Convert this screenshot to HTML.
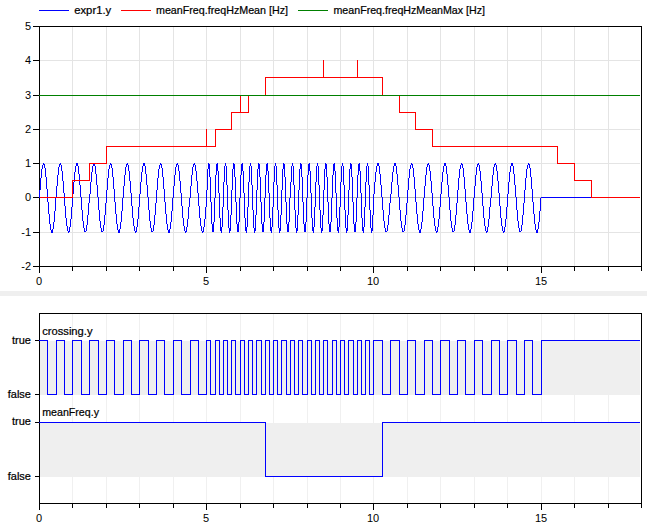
<!DOCTYPE html>
<html><head><meta charset="utf-8"><style>
html,body{margin:0;padding:0;background:#fff;width:647px;height:527px;overflow:hidden;font-family:"Liberation Sans",sans-serif}
svg{display:block}
</style></head><body><svg width="647" height="527" viewBox="0 0 647 527"><g shape-rendering="crispEdges">
<line x1="39" y1="10.5" x2="69" y2="10.5" stroke="#0000ff"/>
<line x1="121" y1="10.5" x2="151" y2="10.5" stroke="#ff0000"/>
<line x1="298" y1="10.5" x2="328" y2="10.5" stroke="#008000"/>
</g>
<text font-family="Liberation Sans, sans-serif" font-size="11" stroke="#000" stroke-width="0.22" fill="#000" y="14.4"><tspan x="74.2" textLength="37" lengthAdjust="spacingAndGlyphs">expr1.y</tspan><tspan x="156" textLength="132" lengthAdjust="spacingAndGlyphs">meanFreq.freqHzMean [Hz]</tspan><tspan x="333.5" textLength="151.5" lengthAdjust="spacingAndGlyphs">meanFreq.freqHzMeanMax [Hz]</tspan></text>
<rect x="0" y="291" width="647" height="5" fill="#efefef"/>
<defs><clipPath id="c1"><rect x="39" y="26" width="601" height="240"/></clipPath><clipPath id="c2"><rect x="39" y="313" width="601" height="190"/></clipPath></defs>
<rect shape-rendering="crispEdges" x="39.5" y="26.5" width="602" height="240" fill="none" stroke="#000"/>
<g shape-rendering="crispEdges">
<line x1="72.5" y1="27" x2="72.5" y2="266" stroke="#e4e4e4"/>
<line x1="106.5" y1="27" x2="106.5" y2="266" stroke="#e4e4e4"/>
<line x1="139.5" y1="27" x2="139.5" y2="266" stroke="#e4e4e4"/>
<line x1="173.5" y1="27" x2="173.5" y2="266" stroke="#e4e4e4"/>
<line x1="206.5" y1="27" x2="206.5" y2="266" stroke="#e4e4e4"/>
<line x1="240.5" y1="27" x2="240.5" y2="266" stroke="#e4e4e4"/>
<line x1="273.5" y1="27" x2="273.5" y2="266" stroke="#e4e4e4"/>
<line x1="307.5" y1="27" x2="307.5" y2="266" stroke="#e4e4e4"/>
<line x1="340.5" y1="27" x2="340.5" y2="266" stroke="#e4e4e4"/>
<line x1="373.5" y1="27" x2="373.5" y2="266" stroke="#e4e4e4"/>
<line x1="407.5" y1="27" x2="407.5" y2="266" stroke="#e4e4e4"/>
<line x1="440.5" y1="27" x2="440.5" y2="266" stroke="#e4e4e4"/>
<line x1="474.5" y1="27" x2="474.5" y2="266" stroke="#e4e4e4"/>
<line x1="507.5" y1="27" x2="507.5" y2="266" stroke="#e4e4e4"/>
<line x1="541.5" y1="27" x2="541.5" y2="266" stroke="#e4e4e4"/>
<line x1="574.5" y1="27" x2="574.5" y2="266" stroke="#e4e4e4"/>
<line x1="608.5" y1="27" x2="608.5" y2="266" stroke="#e4e4e4"/>
<line x1="40" y1="232.5" x2="640" y2="232.5" stroke="#e4e4e4"/>
<line x1="40" y1="197.5" x2="640" y2="197.5" stroke="#b8b8b8"/>
<line x1="40" y1="163.5" x2="640" y2="163.5" stroke="#e4e4e4"/>
<line x1="40" y1="129.5" x2="640" y2="129.5" stroke="#e4e4e4"/>
<line x1="40" y1="95.5" x2="640" y2="95.5" stroke="#e4e4e4"/>
<line x1="40" y1="60.5" x2="640" y2="60.5" stroke="#e4e4e4"/>
</g>
<path clip-path="url(#c1)" shape-rendering="crispEdges" fill="#0000ff" d="M39 190h1v8h-1zM40 178h1v12h-1zM41 169h1v9h-1zM42 165h1v4h-1zM43 163h1v2h-1zM44 164h1v4h-1zM45 168h1v9h-1zM46 177h1v12h-1zM47 189h1v13h-1zM48 202h1v12h-1zM49 214h1v10h-1zM50 224h1v6h-1zM51 230h1v3h-1zM52 229h1v4h-1zM53 222h1v7h-1zM54 211h1v11h-1zM55 198h1v13h-1zM56 186h1v12h-1zM57 175h1v11h-1zM58 167h1v8h-1zM59 164h1v3h-1zM60 163h1v2h-1zM61 165h1v6h-1zM62 171h1v10h-1zM63 181h1v12h-1zM64 193h1v13h-1zM65 206h1v12h-1zM66 218h1v8h-1zM67 226h1v5h-1zM68 231h1v2h-1zM69 227h1v5h-1zM70 219h1v8h-1zM71 207h1v12h-1zM72 194h1v13h-1zM73 182h1v12h-1zM74 172h1v10h-1zM75 166h1v6h-1zM76 163h1v3h-1zM77 163h1v3h-1zM78 166h1v8h-1zM79 174h1v11h-1zM80 185h1v12h-1zM81 197h1v13h-1zM82 210h1v11h-1zM83 221h1v7h-1zM84 228h1v4h-1zM85 231h1v1h-1zM86 225h1v6h-1zM87 215h1v10h-1zM88 203h1v12h-1zM89 194h1v9h-1zM90 182h1v12h-1zM91 172h1v10h-1zM92 166h1v6h-1zM93 163h1v3h-1zM94 163h1v3h-1zM95 166h1v8h-1zM96 174h1v11h-1zM97 185h1v12h-1zM98 197h1v13h-1zM99 210h1v11h-1zM100 221h1v7h-1zM101 228h1v4h-1zM102 231h1v1h-1zM103 225h1v6h-1zM104 215h1v10h-1zM105 203h1v12h-1zM106 190h1v13h-1zM107 178h1v12h-1zM108 169h1v9h-1zM109 165h1v4h-1zM110 163h1v2h-1zM111 164h1v4h-1zM112 168h1v9h-1zM113 177h1v12h-1zM114 189h1v13h-1zM115 202h1v12h-1zM116 214h1v10h-1zM117 224h1v6h-1zM118 230h1v3h-1zM119 229h1v4h-1zM120 222h1v7h-1zM121 211h1v11h-1zM122 198h1v13h-1zM123 186h1v12h-1zM124 175h1v11h-1zM125 167h1v8h-1zM126 164h1v3h-1zM127 163h1v2h-1zM128 165h1v6h-1zM129 171h1v10h-1zM130 181h1v12h-1zM131 193h1v13h-1zM132 206h1v12h-1zM133 218h1v8h-1zM134 226h1v5h-1zM135 231h1v2h-1zM136 227h1v5h-1zM137 219h1v8h-1zM138 207h1v12h-1zM139 194h1v13h-1zM140 182h1v12h-1zM141 172h1v10h-1zM142 166h1v6h-1zM143 163h1v3h-1zM144 163h1v3h-1zM145 166h1v8h-1zM146 174h1v11h-1zM147 185h1v12h-1zM148 197h1v13h-1zM149 210h1v11h-1zM150 221h1v7h-1zM151 228h1v4h-1zM152 231h1v1h-1zM153 225h1v6h-1zM154 215h1v10h-1zM155 203h1v12h-1zM156 190h1v13h-1zM157 178h1v12h-1zM158 169h1v9h-1zM159 165h1v4h-1zM160 163h1v2h-1zM161 164h1v4h-1zM162 168h1v9h-1zM163 177h1v12h-1zM164 189h1v13h-1zM165 202h1v12h-1zM166 214h1v10h-1zM167 224h1v6h-1zM168 230h1v3h-1zM169 229h1v4h-1zM170 222h1v7h-1zM171 211h1v11h-1zM172 198h1v13h-1zM173 186h1v12h-1zM174 175h1v11h-1zM175 167h1v8h-1zM176 164h1v3h-1zM177 163h1v2h-1zM178 165h1v6h-1zM179 171h1v10h-1zM180 181h1v12h-1zM181 193h1v13h-1zM182 206h1v12h-1zM183 218h1v8h-1zM184 226h1v5h-1zM185 231h1v2h-1zM186 227h1v5h-1zM187 219h1v8h-1zM188 207h1v12h-1zM189 198h1v9h-1zM190 186h1v12h-1zM191 175h1v11h-1zM192 167h1v8h-1zM193 164h1v3h-1zM194 163h1v2h-1zM195 165h1v6h-1zM196 171h1v10h-1zM197 181h1v12h-1zM198 193h1v13h-1zM199 206h1v12h-1zM200 218h1v8h-1zM201 226h1v5h-1zM202 231h1v2h-1zM203 227h1v5h-1zM204 219h1v8h-1zM205 207h1v12h-1zM206 190h1v17h-1zM207 169h1v21h-1zM208 163h1v6h-1zM209 164h1v13h-1zM210 177h1v25h-1zM211 202h1v22h-1zM212 224h1v8h-1zM213 222h1v10h-1zM214 198h1v24h-1zM215 175h1v23h-1zM216 164h1v11h-1zM217 163h1v8h-1zM218 171h1v22h-1zM219 193h1v25h-1zM220 218h1v13h-1zM221 227h1v6h-1zM222 207h1v20h-1zM223 182h1v25h-1zM224 166h1v16h-1zM225 163h1v3h-1zM226 166h1v19h-1zM227 185h1v25h-1zM228 210h1v18h-1zM229 228h1v5h-1zM230 215h1v16h-1zM231 190h1v25h-1zM232 169h1v21h-1zM233 163h1v6h-1zM234 164h1v13h-1zM235 177h1v25h-1zM236 202h1v22h-1zM237 224h1v8h-1zM238 222h1v10h-1zM239 198h1v24h-1zM240 175h1v23h-1zM241 164h1v11h-1zM242 163h1v8h-1zM243 171h1v22h-1zM244 193h1v25h-1zM245 218h1v13h-1zM246 227h1v6h-1zM247 207h1v20h-1zM248 182h1v25h-1zM249 166h1v16h-1zM250 163h1v3h-1zM251 166h1v19h-1zM252 185h1v25h-1zM253 210h1v18h-1zM254 228h1v5h-1zM255 215h1v16h-1zM256 190h1v25h-1zM257 169h1v21h-1zM258 163h1v6h-1zM259 164h1v13h-1zM260 177h1v25h-1zM261 202h1v22h-1zM262 224h1v8h-1zM263 222h1v10h-1zM264 198h1v24h-1zM265 175h1v23h-1zM266 164h1v11h-1zM267 163h1v8h-1zM268 171h1v22h-1zM269 193h1v25h-1zM270 218h1v13h-1zM271 227h1v6h-1zM272 207h1v20h-1zM273 182h1v25h-1zM274 166h1v16h-1zM275 163h1v3h-1zM276 166h1v19h-1zM277 185h1v25h-1zM278 210h1v18h-1zM279 228h1v5h-1zM280 215h1v16h-1zM281 190h1v25h-1zM282 169h1v21h-1zM283 163h1v6h-1zM284 164h1v13h-1zM285 177h1v25h-1zM286 202h1v22h-1zM287 224h1v8h-1zM288 222h1v10h-1zM289 198h1v24h-1zM290 182h1v16h-1zM291 166h1v16h-1zM292 163h1v3h-1zM293 166h1v19h-1zM294 185h1v25h-1zM295 210h1v18h-1zM296 228h1v5h-1zM297 215h1v16h-1zM298 190h1v25h-1zM299 169h1v21h-1zM300 163h1v6h-1zM301 164h1v13h-1zM302 177h1v25h-1zM303 202h1v22h-1zM304 224h1v8h-1zM305 222h1v10h-1zM306 198h1v24h-1zM307 175h1v23h-1zM308 164h1v11h-1zM309 163h1v8h-1zM310 171h1v22h-1zM311 193h1v25h-1zM312 218h1v13h-1zM313 227h1v6h-1zM314 207h1v20h-1zM315 182h1v25h-1zM316 166h1v16h-1zM317 163h1v3h-1zM318 166h1v19h-1zM319 185h1v25h-1zM320 210h1v18h-1zM321 228h1v5h-1zM322 215h1v16h-1zM323 190h1v25h-1zM324 169h1v21h-1zM325 163h1v6h-1zM326 164h1v13h-1zM327 177h1v25h-1zM328 202h1v22h-1zM329 224h1v8h-1zM330 222h1v10h-1zM331 198h1v24h-1zM332 175h1v23h-1zM333 164h1v11h-1zM334 163h1v8h-1zM335 171h1v22h-1zM336 193h1v25h-1zM337 218h1v13h-1zM338 227h1v6h-1zM339 207h1v20h-1zM340 182h1v25h-1zM341 166h1v16h-1zM342 163h1v3h-1zM343 166h1v19h-1zM344 185h1v25h-1zM345 210h1v18h-1zM346 228h1v5h-1zM347 215h1v16h-1zM348 190h1v25h-1zM349 169h1v21h-1zM350 163h1v6h-1zM351 164h1v13h-1zM352 177h1v25h-1zM353 202h1v22h-1zM354 224h1v8h-1zM355 222h1v10h-1zM356 198h1v24h-1zM357 175h1v23h-1zM358 164h1v11h-1zM359 163h1v8h-1zM360 171h1v22h-1zM361 193h1v25h-1zM362 218h1v13h-1zM363 227h1v6h-1zM364 207h1v20h-1zM365 182h1v25h-1zM366 166h1v16h-1zM367 163h1v3h-1zM368 166h1v19h-1zM369 185h1v25h-1zM370 210h1v18h-1zM371 228h1v5h-1zM372 215h1v16h-1zM373 194h1v21h-1zM374 182h1v12h-1zM375 172h1v10h-1zM376 166h1v6h-1zM377 163h1v3h-1zM378 163h1v3h-1zM379 166h1v8h-1zM380 174h1v11h-1zM381 185h1v12h-1zM382 197h1v13h-1zM383 210h1v11h-1zM384 221h1v7h-1zM385 228h1v4h-1zM386 231h1v1h-1zM387 225h1v6h-1zM388 215h1v10h-1zM389 203h1v12h-1zM390 194h1v9h-1zM391 182h1v12h-1zM392 172h1v10h-1zM393 166h1v6h-1zM394 163h1v3h-1zM395 163h1v3h-1zM396 166h1v8h-1zM397 174h1v11h-1zM398 185h1v12h-1zM399 197h1v13h-1zM400 210h1v11h-1zM401 221h1v7h-1zM402 228h1v4h-1zM403 231h1v1h-1zM404 225h1v6h-1zM405 215h1v10h-1zM406 203h1v12h-1zM407 190h1v13h-1zM408 178h1v12h-1zM409 169h1v9h-1zM410 165h1v4h-1zM411 163h1v2h-1zM412 164h1v4h-1zM413 168h1v9h-1zM414 177h1v12h-1zM415 189h1v13h-1zM416 202h1v12h-1zM417 214h1v10h-1zM418 224h1v6h-1zM419 230h1v3h-1zM420 229h1v4h-1zM421 222h1v7h-1zM422 211h1v11h-1zM423 198h1v13h-1zM424 186h1v12h-1zM425 175h1v11h-1zM426 167h1v8h-1zM427 164h1v3h-1zM428 163h1v2h-1zM429 165h1v6h-1zM430 171h1v10h-1zM431 181h1v12h-1zM432 193h1v13h-1zM433 206h1v12h-1zM434 218h1v8h-1zM435 226h1v5h-1zM436 231h1v2h-1zM437 227h1v5h-1zM438 219h1v8h-1zM439 207h1v12h-1zM440 194h1v13h-1zM441 182h1v12h-1zM442 172h1v10h-1zM443 166h1v6h-1zM444 163h1v3h-1zM445 163h1v3h-1zM446 166h1v8h-1zM447 174h1v11h-1zM448 185h1v12h-1zM449 197h1v13h-1zM450 210h1v11h-1zM451 221h1v7h-1zM452 228h1v4h-1zM453 231h1v1h-1zM454 225h1v6h-1zM455 215h1v10h-1zM456 203h1v12h-1zM457 190h1v13h-1zM458 178h1v12h-1zM459 169h1v9h-1zM460 165h1v4h-1zM461 163h1v2h-1zM462 164h1v4h-1zM463 168h1v9h-1zM464 177h1v12h-1zM465 189h1v13h-1zM466 202h1v12h-1zM467 214h1v10h-1zM468 224h1v6h-1zM469 230h1v3h-1zM470 229h1v4h-1zM471 222h1v7h-1zM472 211h1v11h-1zM473 198h1v13h-1zM474 186h1v12h-1zM475 175h1v11h-1zM476 167h1v8h-1zM477 164h1v3h-1zM478 163h1v2h-1zM479 165h1v6h-1zM480 171h1v10h-1zM481 181h1v12h-1zM482 193h1v13h-1zM483 206h1v12h-1zM484 218h1v8h-1zM485 226h1v5h-1zM486 231h1v2h-1zM487 227h1v5h-1zM488 219h1v8h-1zM489 207h1v12h-1zM490 198h1v9h-1zM491 186h1v12h-1zM492 175h1v11h-1zM493 167h1v8h-1zM494 164h1v3h-1zM495 163h1v2h-1zM496 165h1v6h-1zM497 171h1v10h-1zM498 181h1v12h-1zM499 193h1v13h-1zM500 206h1v12h-1zM501 218h1v8h-1zM502 226h1v5h-1zM503 231h1v2h-1zM504 227h1v5h-1zM505 219h1v8h-1zM506 207h1v12h-1zM507 194h1v13h-1zM508 182h1v12h-1zM509 172h1v10h-1zM510 166h1v6h-1zM511 163h1v3h-1zM512 163h1v3h-1zM513 166h1v8h-1zM514 174h1v11h-1zM515 185h1v12h-1zM516 197h1v13h-1zM517 210h1v11h-1zM518 221h1v7h-1zM519 228h1v4h-1zM520 231h1v1h-1zM521 225h1v6h-1zM522 215h1v10h-1zM523 203h1v12h-1zM524 190h1v13h-1zM525 178h1v12h-1zM526 169h1v9h-1zM527 165h1v4h-1zM528 163h1v2h-1zM529 164h1v4h-1zM530 168h1v9h-1zM531 177h1v12h-1zM532 189h1v13h-1zM533 202h1v12h-1zM534 214h1v10h-1zM535 224h1v6h-1zM536 230h1v3h-1zM537 229h1v4h-1zM538 222h1v7h-1zM539 211h1v11h-1zM540 198h1v13h-1zM541 197h1v1h-1zM542 197h1v1h-1zM543 197h1v1h-1zM544 197h1v1h-1zM545 197h1v1h-1zM546 197h1v1h-1zM547 197h1v1h-1zM548 197h1v1h-1zM549 197h1v1h-1zM550 197h1v1h-1zM551 197h1v1h-1zM552 197h1v1h-1zM553 197h1v1h-1zM554 197h1v1h-1zM555 197h1v1h-1zM556 197h1v1h-1zM557 197h1v1h-1zM558 197h1v1h-1zM559 197h1v1h-1zM560 197h1v1h-1zM561 197h1v1h-1zM562 197h1v1h-1zM563 197h1v1h-1zM564 197h1v1h-1zM565 197h1v1h-1zM566 197h1v1h-1zM567 197h1v1h-1zM568 197h1v1h-1zM569 197h1v1h-1zM570 197h1v1h-1zM571 197h1v1h-1zM572 197h1v1h-1zM573 197h1v1h-1zM574 197h1v1h-1zM575 197h1v1h-1zM576 197h1v1h-1zM577 197h1v1h-1zM578 197h1v1h-1zM579 197h1v1h-1zM580 197h1v1h-1zM581 197h1v1h-1zM582 197h1v1h-1zM583 197h1v1h-1zM584 197h1v1h-1zM585 197h1v1h-1zM586 197h1v1h-1zM587 197h1v1h-1zM588 197h1v1h-1zM589 197h1v1h-1zM590 197h1v1h-1zM591 197h1v1h-1zM592 197h1v1h-1zM593 197h1v1h-1zM594 197h1v1h-1zM595 197h1v1h-1zM596 197h1v1h-1zM597 197h1v1h-1zM598 197h1v1h-1zM599 197h1v1h-1zM600 197h1v1h-1zM601 197h1v1h-1zM602 197h1v1h-1zM603 197h1v1h-1zM604 197h1v1h-1zM605 197h1v1h-1zM606 197h1v1h-1zM607 197h1v1h-1zM608 197h1v1h-1zM609 197h1v1h-1zM610 197h1v1h-1zM611 197h1v1h-1zM612 197h1v1h-1zM613 197h1v1h-1zM614 197h1v1h-1zM615 197h1v1h-1zM616 197h1v1h-1zM617 197h1v1h-1zM618 197h1v1h-1zM619 197h1v1h-1zM620 197h1v1h-1zM621 197h1v1h-1zM622 197h1v1h-1zM623 197h1v1h-1zM624 197h1v1h-1zM625 197h1v1h-1zM626 197h1v1h-1zM627 197h1v1h-1zM628 197h1v1h-1zM629 197h1v1h-1zM630 197h1v1h-1zM631 197h1v1h-1zM632 197h1v1h-1zM633 197h1v1h-1zM634 197h1v1h-1zM635 197h1v1h-1zM636 197h1v1h-1zM637 197h1v1h-1zM638 197h1v1h-1zM639 197h1v1h-1zM640 197h1v1h-1zM641 197h1v1h-1z"/>
<path clip-path="url(#c1)" shape-rendering="crispEdges" fill="none" stroke="#ff0000" d="M39.5,197.5 H72.5 V180.5 H89.5 V163.5 H106.5 V146.5 H206.5 V129.0 H206.5 V146.5 H215.5 V129.5 H231.5 V112.5 H240.5 V95.0 H240.5 V112.5 H248.5 V95.5 H265.5 V77.5 H323.5 V60.0 H323.5 V77.5 H357.5 V60.0 H357.5 V77.5 H382.5 V95.5 H399.5 V112.5 H415.5 V129.5 H432.5 V146.5 H557.5 V163.5 H574.5 V180.5 H591.5 V197.5 H641.5"/>
<line clip-path="url(#c1)" shape-rendering="crispEdges" x1="39" y1="95.5" x2="642" y2="95.5" stroke="#008000"/>
<g shape-rendering="crispEdges" stroke="#000" fill="none">
<line x1="33" y1="266.5" x2="39" y2="266.5"/>
<line x1="33" y1="232.5" x2="39" y2="232.5"/>
<line x1="33" y1="197.5" x2="39" y2="197.5"/>
<line x1="33" y1="163.5" x2="39" y2="163.5"/>
<line x1="33" y1="129.5" x2="39" y2="129.5"/>
<line x1="33" y1="95.5" x2="39" y2="95.5"/>
<line x1="33" y1="60.5" x2="39" y2="60.5"/>
<line x1="33" y1="26.5" x2="39" y2="26.5"/>
<line x1="39.5" y1="267" x2="39.5" y2="273"/>
<line x1="72.5" y1="267" x2="72.5" y2="271"/>
<line x1="106.5" y1="267" x2="106.5" y2="271"/>
<line x1="139.5" y1="267" x2="139.5" y2="271"/>
<line x1="173.5" y1="267" x2="173.5" y2="271"/>
<line x1="206.5" y1="267" x2="206.5" y2="273"/>
<line x1="240.5" y1="267" x2="240.5" y2="271"/>
<line x1="273.5" y1="267" x2="273.5" y2="271"/>
<line x1="307.5" y1="267" x2="307.5" y2="271"/>
<line x1="340.5" y1="267" x2="340.5" y2="271"/>
<line x1="373.5" y1="267" x2="373.5" y2="273"/>
<line x1="407.5" y1="267" x2="407.5" y2="271"/>
<line x1="440.5" y1="267" x2="440.5" y2="271"/>
<line x1="474.5" y1="267" x2="474.5" y2="271"/>
<line x1="507.5" y1="267" x2="507.5" y2="271"/>
<line x1="541.5" y1="267" x2="541.5" y2="273"/>
<line x1="574.5" y1="267" x2="574.5" y2="271"/>
<line x1="608.5" y1="267" x2="608.5" y2="271"/>
<line x1="641.5" y1="267" x2="641.5" y2="271"/>
</g>
<text font-family="Liberation Sans, sans-serif" font-size="11" text-anchor="end" x="31" y="269.5">-2</text>
<text font-family="Liberation Sans, sans-serif" font-size="11" text-anchor="end" x="31" y="235.5">-1</text>
<text font-family="Liberation Sans, sans-serif" font-size="11" text-anchor="end" x="31" y="200.5">0</text>
<text font-family="Liberation Sans, sans-serif" font-size="11" text-anchor="end" x="31" y="166.5">1</text>
<text font-family="Liberation Sans, sans-serif" font-size="11" text-anchor="end" x="31" y="132.5">2</text>
<text font-family="Liberation Sans, sans-serif" font-size="11" text-anchor="end" x="31" y="98.5">3</text>
<text font-family="Liberation Sans, sans-serif" font-size="11" text-anchor="end" x="31" y="63.5">4</text>
<text font-family="Liberation Sans, sans-serif" font-size="11" text-anchor="end" x="31" y="29.5">5</text>
<text font-family="Liberation Sans, sans-serif" font-size="11" text-anchor="middle" x="39.0" y="285">0</text>
<text font-family="Liberation Sans, sans-serif" font-size="11" text-anchor="middle" x="206.0" y="285">5</text>
<text font-family="Liberation Sans, sans-serif" font-size="11" text-anchor="middle" x="373.0" y="285">10</text>
<text font-family="Liberation Sans, sans-serif" font-size="11" text-anchor="middle" x="541.0" y="285">15</text>
<rect shape-rendering="crispEdges" x="39.5" y="313.5" width="602" height="190" fill="none" stroke="#000"/>
<g shape-rendering="crispEdges">
<line x1="72.5" y1="314" x2="72.5" y2="503" stroke="#f0f0f0"/>
<line x1="106.5" y1="314" x2="106.5" y2="503" stroke="#f0f0f0"/>
<line x1="139.5" y1="314" x2="139.5" y2="503" stroke="#f0f0f0"/>
<line x1="173.5" y1="314" x2="173.5" y2="503" stroke="#f0f0f0"/>
<line x1="206.5" y1="314" x2="206.5" y2="503" stroke="#f0f0f0"/>
<line x1="240.5" y1="314" x2="240.5" y2="503" stroke="#f0f0f0"/>
<line x1="273.5" y1="314" x2="273.5" y2="503" stroke="#f0f0f0"/>
<line x1="307.5" y1="314" x2="307.5" y2="503" stroke="#f0f0f0"/>
<line x1="340.5" y1="314" x2="340.5" y2="503" stroke="#f0f0f0"/>
<line x1="373.5" y1="314" x2="373.5" y2="503" stroke="#f0f0f0"/>
<line x1="407.5" y1="314" x2="407.5" y2="503" stroke="#f0f0f0"/>
<line x1="440.5" y1="314" x2="440.5" y2="503" stroke="#f0f0f0"/>
<line x1="474.5" y1="314" x2="474.5" y2="503" stroke="#f0f0f0"/>
<line x1="507.5" y1="314" x2="507.5" y2="503" stroke="#f0f0f0"/>
<line x1="541.5" y1="314" x2="541.5" y2="503" stroke="#f0f0f0"/>
<line x1="574.5" y1="314" x2="574.5" y2="503" stroke="#f0f0f0"/>
<line x1="608.5" y1="314" x2="608.5" y2="503" stroke="#f0f0f0"/>
<rect x="40" y="341" width="600" height="54" fill="#efefef"/>
<rect x="40" y="423" width="600" height="54" fill="#efefef"/>
</g>
<path clip-path="url(#c2)" shape-rendering="crispEdges" fill="none" stroke="#0000ff" d="M39,340.5 H47.5 V394.5 H56.5 V340.5 H64.5 V394.5 H72.5 V340.5 H81.5 V394.5 H89.5 V340.5 H98.5 V394.5 H106.5 V340.5 H114.5 V394.5 H123.5 V340.5 H131.5 V394.5 H139.5 V340.5 H148.5 V394.5 H156.5 V340.5 H164.5 V394.5 H173.5 V340.5 H181.5 V394.5 H190.5 V340.5 H198.5 V394.5 H206.5 V340.5 H210.5 V394.5 H215.5 V340.5 H219.5 V394.5 H223.5 V340.5 H227.5 V394.5 H231.5 V340.5 H235.5 V394.5 H240.5 V340.5 H244.5 V394.5 H248.5 V340.5 H252.5 V394.5 H256.5 V340.5 H261.5 V394.5 H265.5 V340.5 H269.5 V394.5 H273.5 V340.5 H277.5 V394.5 H281.5 V340.5 H286.5 V394.5 H290.5 V340.5 H294.5 V394.5 H298.5 V340.5 H302.5 V394.5 H307.5 V340.5 H311.5 V394.5 H315.5 V340.5 H319.5 V394.5 H323.5 V340.5 H327.5 V394.5 H332.5 V340.5 H336.5 V394.5 H340.5 V340.5 H344.5 V394.5 H348.5 V340.5 H353.5 V394.5 H357.5 V340.5 H361.5 V394.5 H365.5 V340.5 H369.5 V394.5 H373.5 V340.5 H382.5 V394.5 H390.5 V340.5 H399.5 V394.5 H407.5 V340.5 H415.5 V394.5 H424.5 V340.5 H432.5 V394.5 H440.5 V340.5 H449.5 V394.5 H457.5 V340.5 H465.5 V394.5 H474.5 V340.5 H482.5 V394.5 H491.5 V340.5 H499.5 V394.5 H507.5 V340.5 H516.5 V394.5 H524.5 V340.5 H532.5 V394.5 H541.5 V340.5 H641.5"/>
<path clip-path="url(#c2)" shape-rendering="crispEdges" fill="none" stroke="#0000ff" d="M39,422.5 H265.5 V476.5 H382.5 V422.5 H641.5"/>
<g shape-rendering="crispEdges" stroke="#000" fill="none">
<line x1="35" y1="340.5" x2="39" y2="340.5"/>
<line x1="35" y1="394.5" x2="39" y2="394.5"/>
<line x1="35" y1="422.5" x2="39" y2="422.5"/>
<line x1="35" y1="476.5" x2="39" y2="476.5"/>
<line x1="39.5" y1="504" x2="39.5" y2="510"/>
<line x1="72.5" y1="504" x2="72.5" y2="508"/>
<line x1="106.5" y1="504" x2="106.5" y2="508"/>
<line x1="139.5" y1="504" x2="139.5" y2="508"/>
<line x1="173.5" y1="504" x2="173.5" y2="508"/>
<line x1="206.5" y1="504" x2="206.5" y2="510"/>
<line x1="240.5" y1="504" x2="240.5" y2="508"/>
<line x1="273.5" y1="504" x2="273.5" y2="508"/>
<line x1="307.5" y1="504" x2="307.5" y2="508"/>
<line x1="340.5" y1="504" x2="340.5" y2="508"/>
<line x1="373.5" y1="504" x2="373.5" y2="510"/>
<line x1="407.5" y1="504" x2="407.5" y2="508"/>
<line x1="440.5" y1="504" x2="440.5" y2="508"/>
<line x1="474.5" y1="504" x2="474.5" y2="508"/>
<line x1="507.5" y1="504" x2="507.5" y2="508"/>
<line x1="541.5" y1="504" x2="541.5" y2="510"/>
<line x1="574.5" y1="504" x2="574.5" y2="508"/>
<line x1="608.5" y1="504" x2="608.5" y2="508"/>
<line x1="641.5" y1="504" x2="641.5" y2="508"/>
</g>
<text font-family="Liberation Sans, sans-serif" font-size="11" stroke="#000" stroke-width="0.22" text-anchor="end" x="31" y="424.5">true</text>
<text font-family="Liberation Sans, sans-serif" font-size="11" stroke="#000" stroke-width="0.22" text-anchor="end" x="31" y="343.5">true</text>
<text font-family="Liberation Sans, sans-serif" font-size="11" stroke="#000" stroke-width="0.22" text-anchor="end" x="31" y="397.5">false</text>
<text font-family="Liberation Sans, sans-serif" font-size="11" stroke="#000" stroke-width="0.22" text-anchor="end" x="31" y="479.5">false</text>
<text font-family="Liberation Sans, sans-serif" font-size="11" stroke="#000" stroke-width="0.22" x="42.2" y="335" textLength="50.3" lengthAdjust="spacingAndGlyphs">crossing.y</text>
<text font-family="Liberation Sans, sans-serif" font-size="11" stroke="#000" stroke-width="0.22" x="42.2" y="416" textLength="56.8" lengthAdjust="spacingAndGlyphs">meanFreq.y</text>
<text font-family="Liberation Sans, sans-serif" font-size="11" text-anchor="middle" x="39.0" y="521.5">0</text>
<text font-family="Liberation Sans, sans-serif" font-size="11" text-anchor="middle" x="206.0" y="521.5">5</text>
<text font-family="Liberation Sans, sans-serif" font-size="11" text-anchor="middle" x="373.0" y="521.5">10</text>
<text font-family="Liberation Sans, sans-serif" font-size="11" text-anchor="middle" x="541.0" y="521.5">15</text></svg></body></html>
